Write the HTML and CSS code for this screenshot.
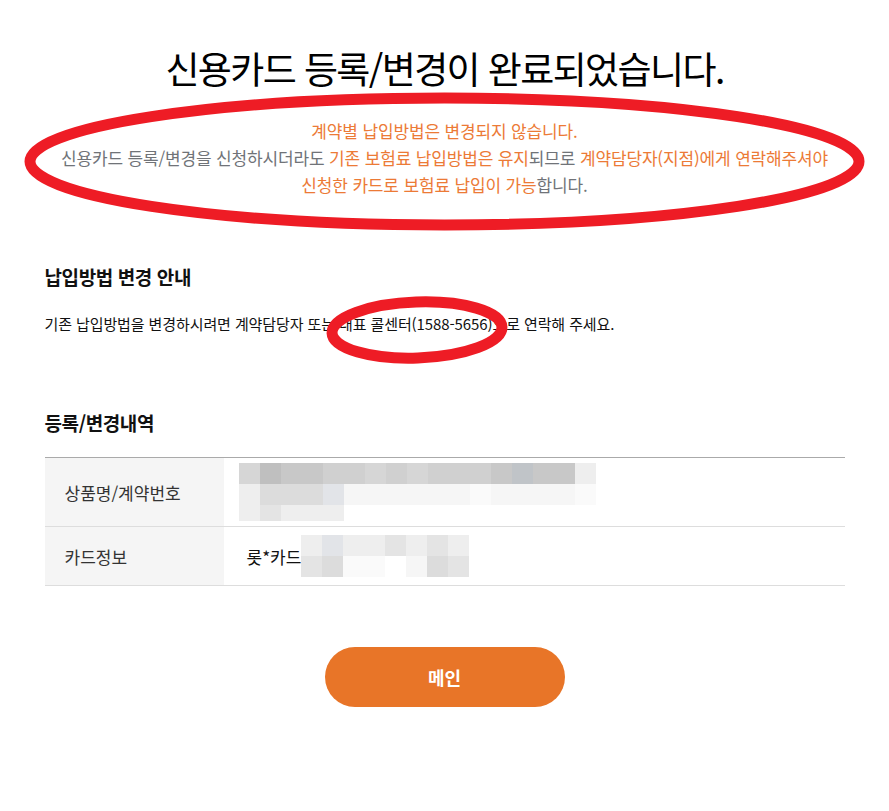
FILE: index.html
```html
<!DOCTYPE html>
<html lang="ko">
<head>
    <meta charset="UTF-8" />
    <title>신용카드 등록/변경 완료</title>
    <link rel="stylesheet" href="styles.css">
</head>
<body>
    <div class="wrap">
        <h1 class="title">신용카드 등록/변경이 완료되었습니다.</h1>

        <p class="notice">
            <span class="hl">계약별 납입방법은 변경되지 않습니다.</span><br>
            신용카드 등록/변경을 신청하시더라도 <span class="hl">기존 보험료 납입방법은 유지</span>되므로 <span class="hl">계약담당자(지점)에게 연락해주셔야</span><br>
            <span class="hl">신청한 카드로 보험료 납입이 가능</span>합니다.
        </p>

        <h2 class="sub">납입방법 변경 안내</h2>
        <p class="desc">기존 납입방법을 변경하시려면 계약담당자 또는 대표 콜센터(1588-5656)으로 연락해 주세요.</p>

        <h2 class="sub sub-list">등록/변경내역</h2>
        <table class="info">
            <tr>
                <th>상품명/계약번호</th>
                <td>
                    <div class="mosaic">
                        <div class="mrow">
                            <i class="s5"></i><i class="s8"></i><i class="s7"></i><i class="s7"></i><i class="s6"></i><i class="s6"></i><i class="s5"></i><i class="s6"></i><i class="s5"></i><i class="s6"></i><i class="s6"></i><i class="s6"></i><i class="s7"></i><i class="s7b"></i><i class="s7"></i><i class="s7"></i><i class="s2"></i>
                        </div>
                        <div class="mrow">
                            <i class="s2"></i><i class="s4"></i><i class="s4"></i><i class="s4"></i><i class="s3b"></i><i class="s1"></i><i class="s1"></i><i class="s1"></i><i class="s1"></i><i class="s1"></i><i class="s1"></i><i class="s0"></i><i class="s1"></i><i class="s1"></i><i class="s1"></i><i class="s1"></i><i class="s0"></i>
                        </div>
                        <div class="mrow short">
                            <i class="s2"></i><i class="s3"></i><i class="s2"></i><i class="s2"></i><i class="s2"></i>
                        </div>
                    </div>
                </td>
            </tr>
            <tr>
                <th>카드정보</th>
                <td>
                    <div class="card">
                        <span class="card-name">롯*카드</span>
                        <div class="mosaic">
                            <div class="mrow">
                                <i class="s2"></i><i class="s3b"></i><i class="s2"></i><i class="s2"></i><i class="s3"></i><i class="s2"></i><i class="s3"></i><i class="s2"></i>
                            </div>
                            <div class="mrow">
                                <i class="s3"></i><i class="s4"></i><i class="s0"></i><i class="s0"></i><i class="sw"></i><i class="s1"></i><i class="s4"></i><i class="s3"></i>
                            </div>
                        </div>
                    </div>
                </td>
            </tr>
        </table>

        <div class="actions">
            <button class="btn-main">메인</button>
        </div>
    </div>

    <!-- red review marks drawn over the page -->
    <svg class="marks" width="889" height="811" viewBox="0 0 889 811">
        <ellipse cx="444.5" cy="161.5" rx="414.5" ry="63.5" />
        <ellipse cx="417" cy="330" rx="85" ry="28" transform="rotate(-2 417 330)" />
    </svg>
</body>
</html>
```

FILE: styles.css
```css
body {
    margin: 0;
    font-family: "Noto Sans CJK KR", "Noto Sans", sans-serif;
    color: #111;
    background: #fff;
}

.wrap {
    width: 800px;
    margin: 0 auto;
    padding-top: 44px;
}

.title {
    margin: 0;
    font-size: 37px;
    font-weight: 400;
    letter-spacing: -1.6px;
    line-height: 48px;
    text-align: center;
    color: #000;
}

.notice {
    margin: 25px 0 0;
    font-size: 17px;
    line-height: 27px;
    letter-spacing: -0.15px;
    text-align: center;
    color: #707378;
}

    .notice .hl {
        color: #ec7a36;
    }

.sub {
    margin: 66px 0 0;
    font-size: 19px;
    font-weight: 700;
    letter-spacing: -0.4px;
    line-height: 26px;
}

.sub-list {
    margin-top: 75px;
}

.desc {
    margin: 23px 0 0;
    font-size: 15px;
    letter-spacing: -0.1px;
    line-height: 22px;
}

.info {
    width: 100%;
    margin-top: 21px;
    border-collapse: collapse;
    border-top: 1px solid #aaa;
    border-bottom: 1px solid #ccc;
}

    .info th, .info td {
        border-bottom: 1px solid #ddd;
        text-align: left;
        font-size: 17px;
        font-weight: 400;
    }

    .info th {
        width: 159px;
        padding: 0 0 0 20px;
        background: #f5f5f5;
        color: #333;
    }

    .info td {
        padding: 0 0 0 15px;
        color: #111;
    }

    .info tr:first-child th,
    .info tr:first-child td {
        height: 68px;
    }

    .info tr:last-child th,
    .info tr:last-child td {
        height: 58px;
    }

.mosaic {
    display: flex;
    flex-direction: column;
}

.mrow {
    display: flex;
    height: 21px;
}

    .mrow.short {
        height: 16px;
    }

    .mrow i {
        display: block;
        width: 21px;
    }

.s0 { background: #fafafa; }
.s1 { background: #f6f6f6; }
.s2 { background: #eeeeee; }
.s3 { background: #e4e4e4; }
.s3b { background: #e2e4e8; }
.s4 { background: #dcdcdc; }
.s5 { background: #d6d6d6; }
.s6 { background: #d0d0d0; }
.s7 { background: #c8c8c8; }
.s7b { background: #c0c4c8; }
.s8 { background: #bfbfbf; }
.sw { background: #fff; }

.card {
    display: flex;
    align-items: center;
}

.card-name {
    padding-left: 8px;
}

.actions {
    display: flex;
    justify-content: center;
    margin-top: 61px;
}

.btn-main {
    width: 240px;
    height: 60px;
    border: none;
    border-radius: 30px;
    background: #e87528;
    color: #fff;
    font-family: inherit;
    font-size: 18px;
    font-weight: 700;
    cursor: pointer;
}

.marks {
    position: absolute;
    top: 0;
    left: 0;
    pointer-events: none;
}

    .marks ellipse {
        fill: none;
        stroke: #ee1c25;
        stroke-width: 11;
    }
```
